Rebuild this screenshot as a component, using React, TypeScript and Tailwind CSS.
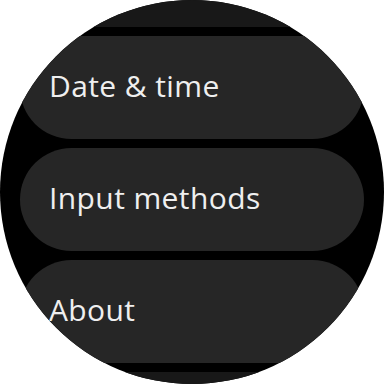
const items = [
  { label: "Display", dim: true },
  { label: "Date & time", dim: false },
  { label: "Input methods", dim: false },
  { label: "About", dim: false },
  { label: "System", dim: true },
];

export default function App() {
  return (
    <div className="h-[384px] w-[384px] bg-white">
      <div className="h-[384px] w-[384px] overflow-hidden rounded-full bg-black">
        <div className="-mt-[76px] flex flex-col gap-[9px] px-[20px]">
          {items.map((item) => (
            <div
              key={item.label}
              className={`flex h-[103px] shrink-0 items-center rounded-full px-[29px] ${
                item.dim ? "bg-[#181818]" : "bg-[#262626]"
              }`}
            >
              <span
                className="pb-[3px] text-[30px] font-medium leading-none tracking-[0.4px] text-[#efefef]"
                style={{ fontFamily: "'Open Sans', 'Liberation Sans', sans-serif" }}
              >
                {item.dim ? "" : item.label}
              </span>
            </div>
          ))}
        </div>
      </div>
    </div>
  );
}
